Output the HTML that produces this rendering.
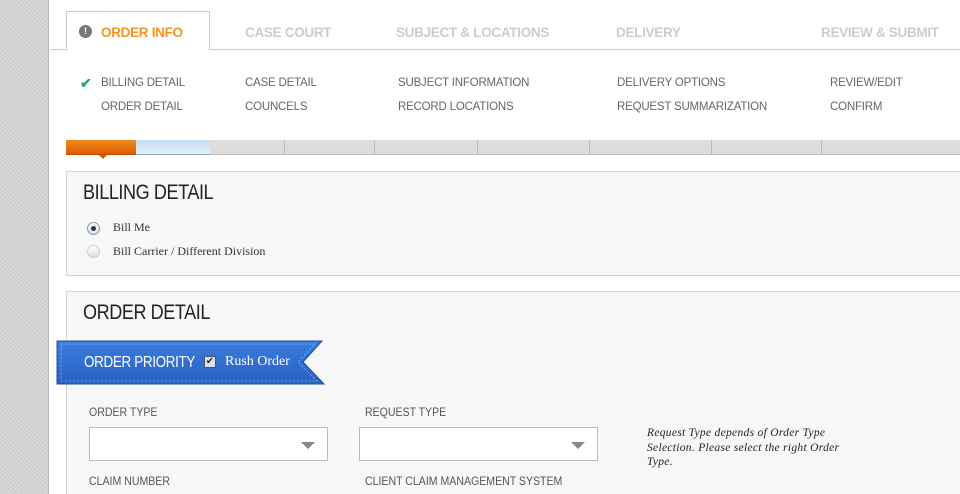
<!DOCTYPE html>
<html><head><style>
*{margin:0;padding:0;box-sizing:border-box}
html,body{width:960px;height:494px;overflow:hidden}
body{background:#fff;font-family:"Liberation Sans",sans-serif;position:relative}
.strip{position:absolute;left:0;top:0;width:49px;height:494px;background:repeating-linear-gradient(45deg,#c9c9c9 0 1px,#d6d6d6 1px 3px);border-right:1px solid #b8b8b8}
.a{position:absolute;white-space:nowrap}
.tabline{position:absolute;left:50px;top:49px;width:910px;height:1px;background:#ccc}
.tab{position:absolute;left:66px;top:11px;width:144px;height:39px;border:1px solid #ccc;border-bottom:none;background:#fff}
.th{font-size:13.5px;font-weight:bold;color:#ccc;top:25px;letter-spacing:-.3px}
.sub{font-size:11.5px;color:#666;letter-spacing:-.2px}
.bar{position:absolute;top:140px;height:15px;background:#dcdcdc;border-bottom:1px solid #c4c4c4}
.panel{position:absolute;left:66px;width:900px;background:#f7f7f7;border:1px solid #d4d4d4}
.h{font-size:21px;color:#222;letter-spacing:-.5px;transform:scaleX(.86);transform-origin:left}
.radio{position:absolute;width:13px;height:13px;border-radius:50%;border:1px solid #aaa;background:linear-gradient(#fff,#ddd)}
.serif{font-family:"Liberation Serif",serif;font-size:12px;color:#333}
.lbl{font-size:12px;color:#555;transform:scaleX(.88);transform-origin:left}
.sel{position:absolute;top:427px;height:34px;background:#fff;border:1px solid #bbb}
.sel:after{content:"";position:absolute;right:12px;top:14px;border:7px solid transparent;border-top:7px solid #888;border-bottom:none}
</style></head><body>
<div class="strip"></div>
<div class="tabline"></div>
<div class="tab"></div>
<div class="a" style="left:79px;top:25px;width:13px;height:13px;border-radius:50%;background:#777;color:#fff;font-size:9px;text-align:center;line-height:13px;font-weight:bold">!</div>
<div class="a th" style="left:101px;color:#f7941d">ORDER INFO</div>
<div class="a th" style="left:245px">CASE COURT</div>
<div class="a th" style="left:396px">SUBJECT &amp; LOCATIONS</div>
<div class="a th" style="left:616px">DELIVERY</div>
<div class="a th" style="left:821px">REVIEW &amp; SUBMIT</div>
<div class="a" style="left:80px;top:75px;color:#2aa57a;font-size:14px;font-weight:bold">✔</div>
<div class="a sub" style="left:101px;top:77px">BILLING DETAIL</div>
<div class="a sub" style="left:101px;top:101px">ORDER DETAIL</div>
<div class="a sub" style="left:245px;top:77px">CASE DETAIL</div>
<div class="a sub" style="left:245px;top:101px">COUNCELS</div>
<div class="a sub" style="left:398px;top:77px">SUBJECT INFORMATION</div>
<div class="a sub" style="left:398px;top:101px">RECORD LOCATIONS</div>
<div class="a sub" style="left:617px;top:77px">DELIVERY OPTIONS</div>
<div class="a sub" style="left:617px;top:101px">REQUEST SUMMARIZATION</div>
<div class="a sub" style="left:830px;top:77px">REVIEW/EDIT</div>
<div class="a sub" style="left:830px;top:101px">CONFIRM</div>
<div class="bar" style="left:66px;width:894px"></div>
<div class="bar" style="left:66px;width:70px;background:linear-gradient(#f08a1a,#e05a00);border-bottom-color:#c04a00"></div>
<div class="a" style="left:99px;top:155px;border:4px solid transparent;border-top:4px solid #e05a00"></div>
<div class="bar" style="left:136px;width:74px;background:linear-gradient(#c4dcf2,#e4f0fb);border-bottom-color:#8ab"></div>
<div class="a" style="left:284px;top:140px;width:1px;height:15px;background:#bbb"></div>
<div class="a" style="left:374px;top:140px;width:1px;height:15px;background:#bbb"></div>
<div class="a" style="left:477px;top:140px;width:1px;height:15px;background:#bbb"></div>
<div class="a" style="left:589px;top:140px;width:1px;height:15px;background:#bbb"></div>
<div class="a" style="left:711px;top:140px;width:1px;height:15px;background:#bbb"></div>
<div class="a" style="left:821px;top:140px;width:1px;height:15px;background:#bbb"></div>
<div class="panel" style="top:171px;height:105px"></div>
<div class="a h" style="left:83px;top:181px">BILLING DETAIL</div>
<div class="radio" style="left:87px;top:222px;border-color:#7a9cc0"><div style="position:absolute;left:3px;top:3px;width:5px;height:5px;border-radius:50%;background:#335"></div></div>
<div class="a serif" style="left:113px;top:220px">Bill Me</div>
<div class="radio" style="left:87px;top:245px;border-color:#ccc"></div>
<div class="a serif" style="left:113px;top:244px">Bill Carrier / Different Division</div>
<div class="panel" style="top:291px;height:210px"></div>
<div class="a h" style="left:83px;top:301px">ORDER DETAIL</div>
<svg class="a" style="left:56px;top:340px" width="272" height="46"><defs><linearGradient id="g" x1="0" y1="0" x2="0" y2="1"><stop offset="0" stop-color="#3a7de0"/><stop offset="1" stop-color="#2860c0"/></linearGradient></defs><polygon points="1,1 266,1 247,22 268,44 1,44" fill="url(#g)" stroke="#1f4f9e"/><polyline points="5,4 259,4 242,22 261,41 5,41 5,4" fill="none" stroke="#8ab4ee" stroke-dasharray="2,2" stroke-width=".8"/></svg>
<div class="a" style="left:84px;top:354px;color:#fff;font-size:16px;letter-spacing:-.4px;transform:scaleX(.84);transform-origin:left">ORDER PRIORITY</div>
<div class="a" style="left:204px;top:356px;width:12px;height:12px;background:#d8e2ee;border:1px solid #456;color:#234;font-size:10px;line-height:10px;text-align:center">✔</div>
<div class="a serif" style="left:225px;top:354px;color:#fff;font-size:14px">Rush Order</div>
<div class="a lbl" style="left:89px;top:405px">ORDER TYPE</div>
<div class="a lbl" style="left:365px;top:405px">REQUEST TYPE</div>
<div class="sel" style="left:89px;width:239px"></div>
<div class="sel" style="left:359px;width:239px"></div>
<div class="a serif" style="left:647px;top:426px;font-style:italic;font-size:11.5px;line-height:14.5px;color:#222;letter-spacing:.3px">Request Type depends of Order Type<br>Selection. Please select the right Order<br>Type.</div>
<div class="a lbl" style="left:89px;top:474px">CLAIM NUMBER</div>
<div class="a lbl" style="left:365px;top:474px">CLIENT CLAIM MANAGEMENT SYSTEM</div>
</body></html>
